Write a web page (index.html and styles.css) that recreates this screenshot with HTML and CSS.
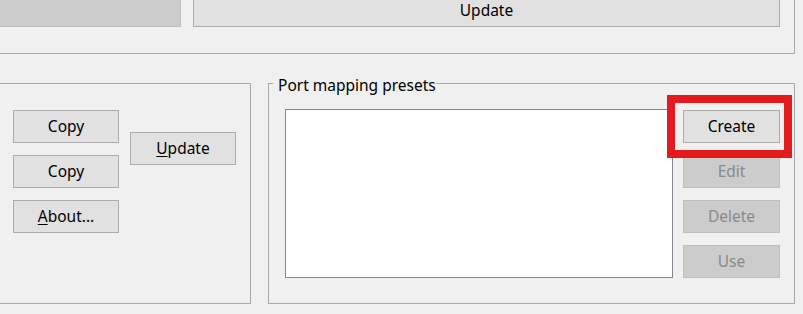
FILE: index.html
```html
<!DOCTYPE html>
<html>
<head>
    <meta charset="UTF-8">
    <title>Port mapping presets</title>
    <link rel="stylesheet" href="styles.css">
</head>
<body>
    <div class="group top-group">
        <button class="btn off-left" disabled></button>
        <button class="btn wide">Update</button>
    </div>

    <div class="bottom">
        <div class="group tools">
            <div class="col">
                <button class="btn">Copy</button>
                <button class="btn">Copy</button>
                <button class="btn"><u>A</u>bout...</button>
            </div>
            <div class="col second">
                <button class="btn"><u>U</u>pdate</button>
            </div>
        </div>

        <fieldset class="presets">
            <legend>Port mapping presets</legend>
            <div class="list"></div>
            <div class="col side">
                <div class="mark-wrap">
                    <button class="btn">Create</button>
                    <span class="mark"></span>
                </div>
                <button class="btn" disabled>Edit</button>
                <button class="btn" disabled>Delete</button>
                <button class="btn" disabled>Use</button>
            </div>
        </fieldset>
    </div>
</body>
</html>
```

FILE: styles.css
```css
body {
    margin: 0;
    width: 803px;
    height: 314px;
    overflow: hidden;
    background-color: #f0f0f0;
    font-family: 'Noto Sans', 'Open Sans', sans-serif;
    font-size: 15.5px;
    color: #000;
}
.group {
    box-sizing: border-box;
    border: 1px solid #a9a9a9;
}
.btn {
    box-sizing: border-box;
    display: block;
    height: 33px;
    width: 106px;
    padding: 0 0 1px;
    border: 1px solid #adadad;
    border-radius: 0;
    background-color: #e1e1e1;
    font-family: inherit;
    font-size: 15.5px;
    color: #000;
}
.btn:disabled {
    background-color: #cccccc;
    border-color: #bfbfbf;
    color: #8a8a8a;
}
.btn u {
    text-underline-offset: 2px;
}

/* upper group, partly off screen */
.top-group {
    display: flex;
    gap: 12px;
    width: 805px;
    margin: -20px 0 0 -10px;
    padding: 13px 14px 26px 0;
}
.off-left {
    width: 190px;
}
.wide {
    width: 587px;
}

.bottom {
    display: flex;
    gap: 17px;
    margin-top: 17px;
}
.col {
    display: flex;
    flex-direction: column;
    gap: 12px;
}
.tools {
    display: flex;
    gap: 11px;
    width: 261px;
    margin: 12px 0 0 -10px;
    padding: 26px 14px 0 22px;
}
.tools .second {
    margin-top: 22px;
}

/* port mapping presets group box */
.presets {
    box-sizing: border-box;
    display: flex;
    align-items: flex-start;
    gap: 10px;
    width: 527px;
    margin: 0;
    padding: 14px 14px 25px 16px;
    border: 1px solid #a9a9a9;
    min-width: 0;
}
.presets legend {
    margin-left: -12px;
    padding: 4px 0 0 5px;
    line-height: 20px;
}
.list {
    box-sizing: border-box;
    width: 388px;
    height: 169px;
    background-color: #fff;
    border: 1px solid #828790;
}
.side {
    margin-top: 1px;
}
.side .btn {
    width: 97px;
}
.mark-wrap {
    position: relative;
}
.mark {
    position: absolute;
    left: -16px;
    top: -15px;
    width: 125px;
    height: 63px;
    box-sizing: border-box;
    border: 8px solid #e31b1e;
    z-index: 1;
}
```
